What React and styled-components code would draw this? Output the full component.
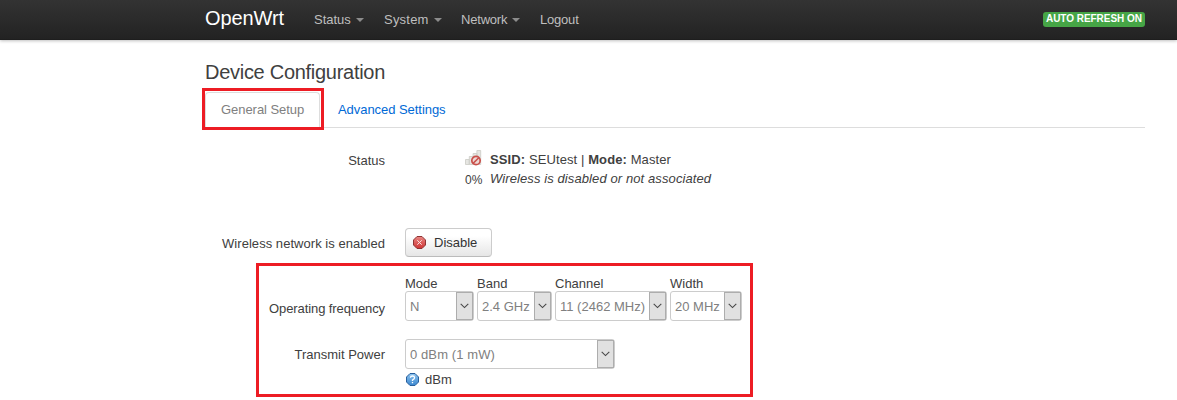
import React from "react";
import styled, { createGlobalStyle } from "styled-components";

const GlobalStyle = createGlobalStyle`
  * { box-sizing: border-box; }
  body {
    margin: 0;
    background: #fff;
    color: #404040;
    font: 13px/18px "Liberation Sans", Arial, sans-serif;
    overflow: hidden;
  }
`;

const Header = styled.header`
  height: 40px;
  background: linear-gradient(#333, #222);
  box-shadow: 0 1px 3px rgba(0, 0, 0, 0.25), inset 0 -1px 0 rgba(0, 0, 0, 0.1);
`;

const HeaderInner = styled.div`
  width: 940px;
  height: 40px;
  margin-left: 205px;
  display: flex;
  align-items: flex-start;
`;

const Brand = styled.a`
  width: 99px;
  padding-top: 8px;
  color: #fff;
  font-size: 20px;
  line-height: 20px;
  letter-spacing: -0.1px;
`;

const Nav = styled.nav`
  display: flex;
  flex: 1;
`;

const NavItem = styled.a`
  width: ${(p) => p.$width}px;
  padding: 11px 0 0 10px;
  color: #bfbfbf;
  display: flex;
  white-space: nowrap;
  letter-spacing: ${(p) => p.$spacing || 0}px;
`;

const Caret = styled.i`
  width: 0;
  height: 0;
  margin: 7px 0 0 5px;
  border: 4px solid transparent;
  border-top-color: #8c8c8c;
  border-bottom: 0;
`;

const Badge = styled.span`
  width: 102px;
  height: 15px;
  margin-top: 12px;
  padding-left: 3px;
  border-radius: 3px;
  background: #46a546;
  color: #fff;
  font-size: 10px;
  font-weight: bold;
  line-height: 14px;
  white-space: nowrap;
  letter-spacing: -0.04px;
`;

const Main = styled.main`
  width: 940px;
  margin-left: 205px;
  padding-top: 14px;
`;

const Title = styled.h2`
  margin: 0;
  height: 36px;
  font-size: 20px;
  font-weight: normal;
  line-height: 36px;
  letter-spacing: -0.28px;
`;

const Tabs = styled.div`
  height: 38px;
  display: flex;
  padding-top: 2px;
  border-bottom: 1px solid #ddd;
`;

const Tab = styled.a`
  position: relative;
  width: ${(p) => p.$width}px;
  height: 36px;
  padding-left: 15px;
  border: 1px solid ${(p) => (p.$active ? "#ddd" : "transparent")};
  border-bottom-color: ${(p) => (p.$active ? "#fff" : "transparent")};
  border-radius: 4px 4px 0 0;
  color: ${(p) => (p.$active ? "#808080" : "#0069d6")};
  line-height: 34px;
  letter-spacing: -0.05px;
  white-space: nowrap;
  margin-right: 2px;
`;

const Marker = styled.div`
  position: absolute;
  left: ${(p) => p.$left}px;
  top: ${(p) => p.$top}px;
  width: ${(p) => p.$width}px;
  height: ${(p) => p.$height}px;
  border: 3px solid #ed1c24;
  pointer-events: none;
`;

const Row = styled.div`
  display: flex;
  height: ${(p) => p.$height}px;
`;

const Label = styled.label`
  width: 180px;
  padding-top: ${(p) => p.$top}px;
  margin-right: 20px;
  display: flex;
  justify-content: flex-end;
  white-space: nowrap;
  letter-spacing: ${(p) => p.$spacing || 0}px;
`;

const StatusBox = styled.div`
  display: flex;
  padding: 22px 0 0 60px;
`;

const Signal = styled.div`
  width: 25px;
  svg { display: block; }
`;

const Percent = styled.div`
  margin-top: 6px;
  font-size: 12px;
  line-height: 16px;
`;

const StatusText = styled.div`
  line-height: 19px;
  letter-spacing: 0.1px;
  white-space: nowrap;
`;

const Button = styled.button`
  width: 87px;
  height: 29px;
  margin: 0;
  padding: 0 0 0 7px;
  display: flex;
  align-items: center;
  gap: 8px;
  border: 1px solid #ccc;
  border-bottom-color: #bbb;
  border-radius: 4px;
  background: linear-gradient(#fff, #fff 25%, #e6e6e6);
  color: #333;
  font: inherit;
  line-height: 18px;
`;

const Fields = styled.div`
  display: flex;
  gap: 3px;
  padding-top: 18px;
`;

const Field = styled.div`
  width: ${(p) => p.$width}px;
`;

const Caption = styled.div`
  height: 16px;
  line-height: 18px;
`;

const Select = styled.div`
  width: ${(p) => p.$width}px;
  height: 30px;
  padding-left: 4px;
  display: flex;
  justify-content: space-between;
  border: 1px solid #ccc;
  border-radius: 3px;
  color: #808080;
  line-height: 29px;
  white-space: nowrap;
  letter-spacing: ${(p) => p.$spacing || 0}px;
`;

const Arrow = styled.span`
  width: 17px;
  height: 28px;
  display: flex;
  align-items: center;
  justify-content: center;
  border: 1px solid #adadad;
  background: #e1e1e1;
`;

const Power = styled.div`
  padding-top: 18px;
`;

const Help = styled.div`
  display: flex;
  align-items: flex-start;
  gap: 6px;
  padding: 2px 0 0 1px;
  svg { margin-top: 2px; }
`;

const Dropdown = ({ width, spacing, children }) => (
  <Select $width={width} $spacing={spacing}>
    <span>{children}</span>
    <Arrow>
      <svg width="9" height="6" viewBox="0 0 9 6">
        <path d="M0.7 0.9 4.5 4.6 8.3 0.9" fill="none" stroke="#484848" strokeWidth="1.1" />
      </svg>
    </Arrow>
  </Select>
);

const SignalIcon = () => (
  <svg width="17" height="16" viewBox="0 0 17 16">
    <g fill="#e6e6e2" stroke="#cfcfca" strokeWidth="0.9">
      <path d="M.5 9.5h3.800v5h-3.800zM4.300 6.500h3.800v8h-3.800zM8.100 3.500h3.800v11h-3.800zM11.900.5h3.800v14h-3.800z" />
    </g>
    <circle cx="11" cy="10.500" r="4.200" fill="#eed8d5" stroke="#c9504b" strokeWidth="1.700" />
    <path d="m8.200 13.300 5.600-5.600" stroke="#c9504b" strokeWidth="1.600" />
  </svg>
);

const StopIcon = () => (
  <svg width="13" height="13" viewBox="0 0 13 13">
    <defs>
      <linearGradient id="stop" x2="0" y2="1">
        <stop stopColor="#e98783" />
        <stop offset="1" stopColor="#cf3434" />
      </linearGradient>
    </defs>
    <path d="M4 .5h5L12.500 4v5L9 12.500H4L.5 9V4z" fill="url(#stop)" stroke="#8e3434" />
    <path d="m4.300 4.300 4.400 4.400m0-4.400-4.400 4.400" stroke="#fbe4e4" strokeWidth="1" />
  </svg>
);

const HelpIcon = () => (
  <svg width="13" height="13" viewBox="0 0 13 13">
    <defs>
      <linearGradient id="help" x2="0" y2="1">
        <stop stopColor="#8fc4ee" />
        <stop offset="1" stopColor="#3986cf" />
      </linearGradient>
    </defs>
    <path d="M4 .5h5L12.500 4v5L9 12.500H4L.5 9V4z" fill="url(#help)" stroke="#285f9c" />
    <path d="M4.400 4.800Q4.500 3 6.500 3t2.100 1.700Q8.600 5.800 6.500 7v1M6.500 9v1.300" fill="none" stroke="#fff" strokeWidth="1.300" />
  </svg>
);

export default function App() {
  return (
    <>
      <GlobalStyle />
      <Header>
        <HeaderInner>
          <Brand>OpenWrt</Brand>
          <Nav>
            <NavItem $width={70}>Status<Caret /></NavItem>
            <NavItem $width={77} $spacing={0.22}>System<Caret /></NavItem>
            <NavItem $width={79} $spacing={-0.2}>Network<Caret /></NavItem>
            <NavItem $width={60} $spacing={-0.2}>Logout</NavItem>
          </Nav>
          <Badge>AUTO REFRESH ON</Badge>
        </HeaderInner>
      </Header>
      <Main>
        <Title>Device Configuration</Title>
        <Tabs>
          <Tab $active $width={115}>
            General Setup
            <Marker $left={-4} $top={-5} $width={122} $height={42} />
          </Tab>
          <Tab $width={140}>Advanced Settings</Tab>
        </Tabs>
        <Row $height={100}>
          <Label $top={24}>Status</Label>
          <StatusBox>
            <Signal>
              <SignalIcon />
              <Percent>0%</Percent>
            </Signal>
            <StatusText>
              <b>SSID:</b> SEUtest | <b>Mode:</b> Master
              <br />
              <em>Wireless is disabled or not associated</em>
            </StatusText>
          </StatusBox>
        </Row>
        <Row $height={29}>
          <Label $top={7} $spacing={0.04}>Wireless network is enabled</Label>
          <Button type="button"><StopIcon />Disable</Button>
        </Row>
        <Row $height={64}>
          <Label $top={43} $spacing={-0.1}>Operating frequency</Label>
          <Fields>
            <Field $width={69}><Caption>Mode</Caption><Dropdown width={69}>N</Dropdown></Field>
            <Field $width={75}><Caption>Band</Caption><Dropdown width={75}>2.4 GHz</Dropdown></Field>
            <Field $width={112}><Caption>Channel</Caption><Dropdown width={112}>11 (2462 MHz)</Dropdown></Field>
            <Field $width={72}><Caption>Width</Caption><Dropdown width={72}>20 MHz</Dropdown></Field>
          </Fields>
        </Row>
        <Row $height={79}>
          <Label $top={25}>Transmit Power</Label>
          <Power>
            <Dropdown width={210} spacing={0.1}>0 dBm (1 mW)</Dropdown>
            <Help><HelpIcon />dBm</Help>
          </Power>
        </Row>
      </Main>
      <Marker $left={256} $top={263} $width={497} $height={134} />
    </>
  );
}
